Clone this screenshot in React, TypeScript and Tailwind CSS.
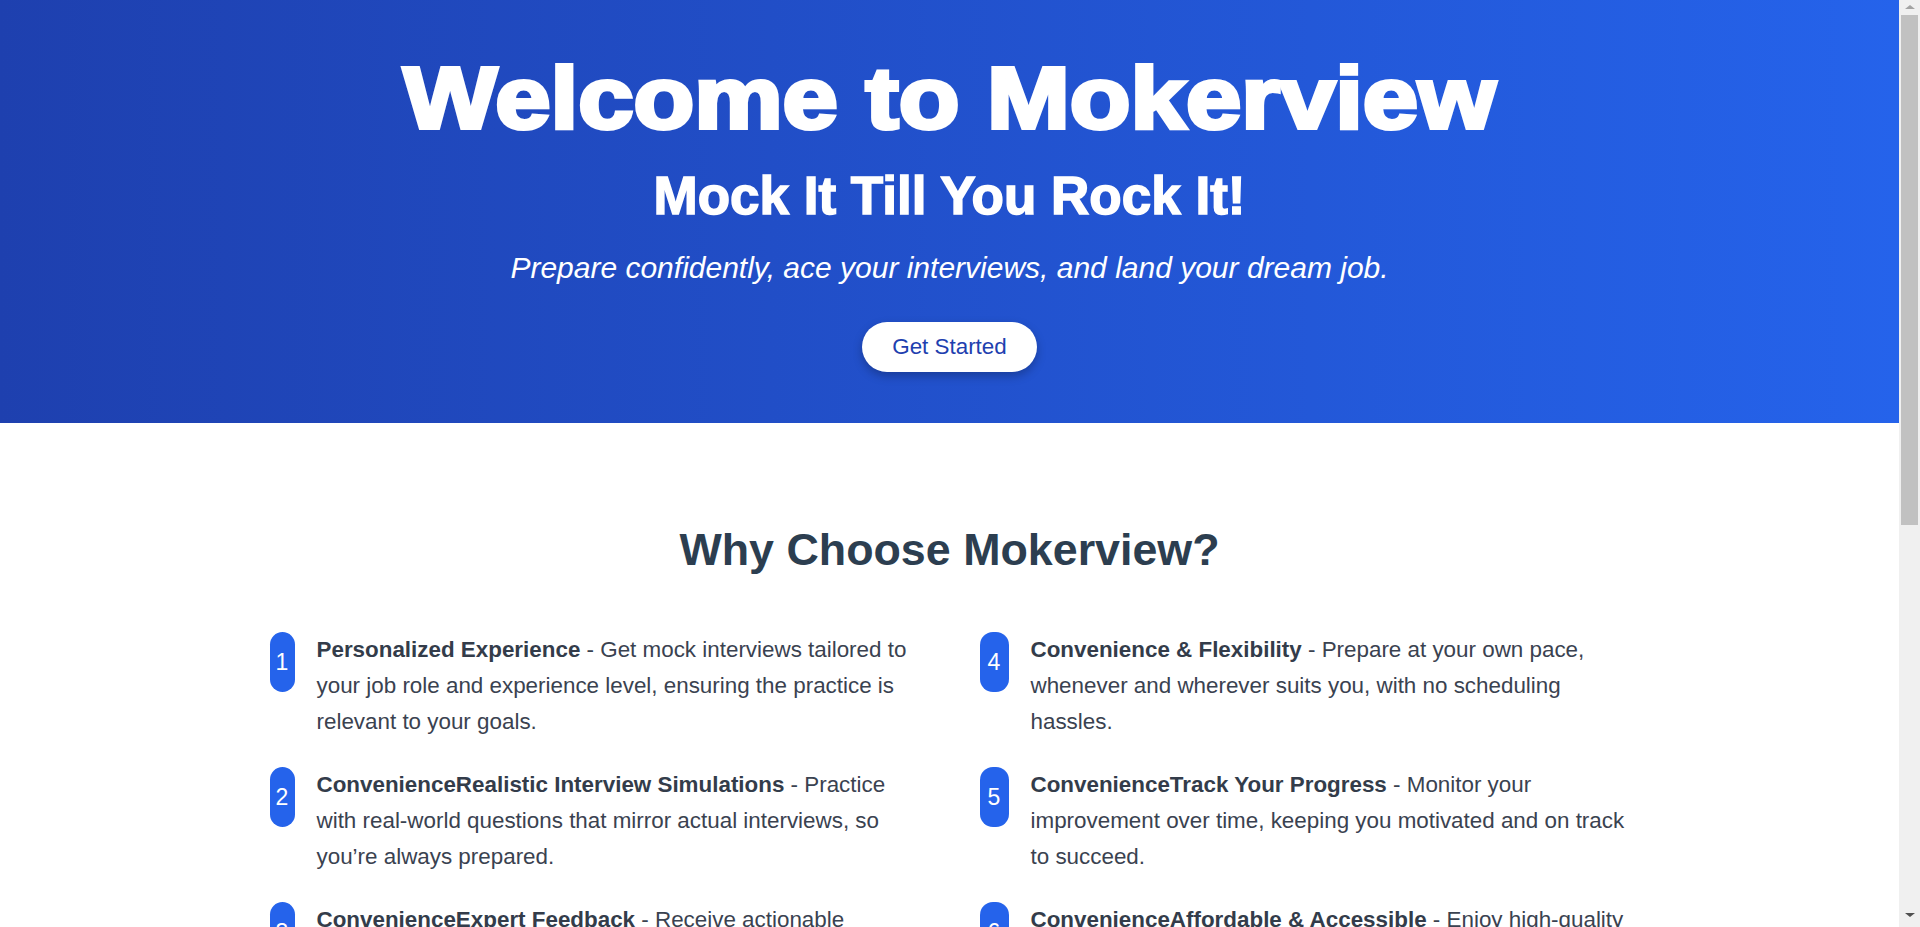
const features = [
  {
    n: 1,
    title: "Personalized Experience",
    text: "Get mock interviews tailored to your job role and experience level, ensuring the practice is relevant to your goals.",
  },
  {
    n: 2,
    title: "ConvenienceRealistic Interview Simulations",
    text: "Practice with real-world questions that mirror actual interviews, so you’re always prepared.",
  },
  {
    n: 3,
    title: "ConvenienceExpert Feedback",
    text: "Receive actionable insights on your answers, tone and body language to improve with every session.",
  },
];

const features2 = [
  {
    n: 4,
    title: "Convenience & Flexibility",
    text: "Prepare at your own pace, whenever and wherever suits you, with no scheduling hassles.",
  },
  {
    n: 5,
    title: "ConvenienceTrack Your Progress",
    text: "Monitor your improvement over time, keeping you motivated and on track to succeed.",
  },
  {
    n: 6,
    title: "ConvenienceAffordable & Accessible",
    text: "Enjoy high-quality interview preparation without breaking the bank.",
  },
];

type Feature = { n: number; title: string; text: string };

const FeatureItem = ({ f, wide }: { f: Feature; wide?: boolean }) => (
  <li className="flex items-start gap-[22px]">
    <span
      className={`flex h-[60px] shrink-0 items-center justify-center rounded-[13px] bg-[#2563eb] text-[23px] text-white ${
        wide ? "w-[29px]" : "w-[25px]"
      }`}
    >
      {f.n}
    </span>
    <p className="text-[22.4px] leading-[36px] text-[#3a4250]">
      <strong className="font-bold text-[#333c4a]">{f.title}</strong> - {f.text}
    </p>
  </li>
);

// classic browser scrollbar seen at the right edge of the page
const Scrollbar = () => (
  <aside className="flex w-[21px] shrink-0 flex-col items-center bg-[#f0f0f0]">
    <svg width="12" height="8" viewBox="0 0 12 8" className="mt-[3px]">
      <path d="M1 6 L6 2 L11 6 Z" fill="#a3a3a3" />
    </svg>
    <div className="mt-[4px] h-[510px] w-[17px] bg-[#c1c1c1]" />
    <div className="flex-1" />
    <svg width="12" height="8" viewBox="0 0 12 8" className="mb-[8px]">
      <path d="M1 2 L6 6 L11 2 Z" fill="#505050" />
    </svg>
  </aside>
);

export default function App() {
  return (
    <div className="flex h-screen overflow-hidden bg-white font-['Liberation_Sans',Arial,sans-serif]">
      <main className="min-w-0 flex-1">
        {/* hero */}
        <header className="flex flex-col items-center bg-gradient-to-r from-[#1e40af] to-[#2563eb] pt-[47px] pb-[51px] text-center text-white">
          <h1 className="scale-x-[1.13] text-[88px] font-bold leading-[102px] [-webkit-text-stroke:4px_white]">
            Welcome to Mokerview
          </h1>
          <h2 className="mt-[17px] text-[53px] font-bold leading-[60px] [-webkit-text-stroke:1.5px_white]">
            Mock It Till You Rock It!
          </h2>
          <p className="mt-[25px] text-[30px] italic leading-[34px]">
            Prepare confidently, ace your interviews, and land your dream job.
          </p>
          <button className="mt-[37px] rounded-full bg-white px-[30px] py-3 text-[22.4px] leading-[26px] text-[#1e40af] shadow-[0_4px_10px_rgba(0,0,0,0.25)]">
            Get Started
          </button>
        </header>

        {/* why choose */}
        <section className="px-5 pt-[100px] pb-[80px]">
          <h2 className="mb-[57px] text-center text-[44.8px] font-bold leading-[52px] text-[#2c3e50]">
            Why Choose Mokerview?
          </h2>
          <div className="mx-auto grid max-w-[1360px] grid-cols-2 gap-x-[60px]">
            <ul className="flex flex-col gap-[27px]">
              {features.map((f) => (
                <FeatureItem key={f.n} f={f} />
              ))}
            </ul>
            <ul className="flex flex-col gap-[27px]">
              {features2.map((f) => (
                <FeatureItem key={f.n} f={f} wide />
              ))}
            </ul>
          </div>
        </section>
      </main>
      <Scrollbar />
    </div>
  );
}
